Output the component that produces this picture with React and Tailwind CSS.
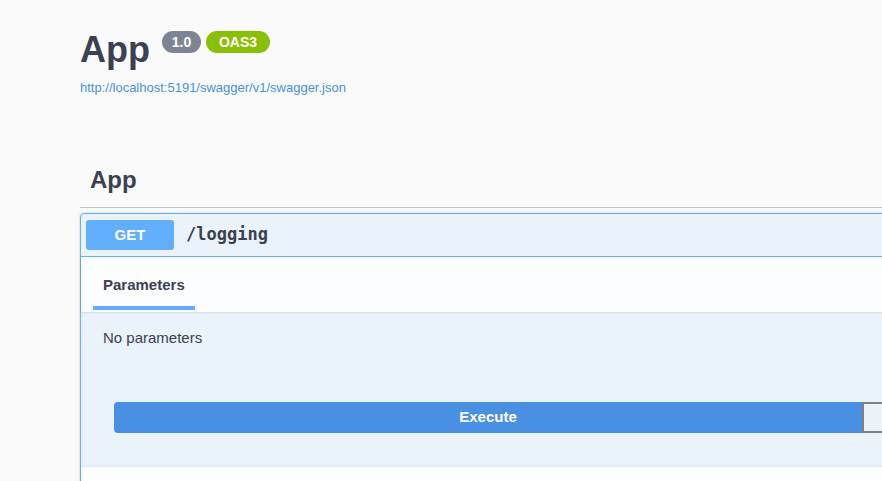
const Badge = ({ children, className }) => (
  <span className={`flex h-[22px] items-center justify-center rounded-full text-[14px] font-bold leading-none text-white ${className}`}>
    {children}
  </span>
);

const App = () => {
  return (
    <div className="h-screen w-screen overflow-hidden bg-[#fafafa] font-['Liberation_Sans',Arial,sans-serif] text-[#3b4151]">
      <div className="w-[1700px] pl-[80px]">
        {/* info header */}
        <div className="pt-[32px]">
          <div className="flex items-start">
            <h2 className="text-[36px] font-bold leading-[36px]">App</h2>
            <Badge className="ml-[12px] -mt-[1px] w-[39px] bg-[#7d8492]">1.0</Badge>
            <Badge className="ml-[5px] -mt-[1px] w-[64px] bg-[#89bf04]">OAS3</Badge>
          </div>
          <a className="mt-[12px] block text-[13px] leading-[16px] text-[#4990e2]">http://localhost:5191/swagger/v1/swagger.json</a>
        </div>

        {/* tag */}
        <div className="mt-[72px] border-b border-[#c1c3c7] pb-[15px] pl-[10px]">
          <h3 className="text-[24px] font-bold leading-[24px]">App</h3>
        </div>

        {/* operation block */}
        <div className="mt-[5px] rounded-[4px] border border-[#61affe] bg-[rgba(97,175,254,0.1)] shadow-[0_0_3px_rgba(0,0,0,0.19)]">
          <div className="flex items-center border-b border-[#61affe] px-[5px] py-[6px]">
            <span className="flex h-[30px] w-[88px] items-center justify-center rounded-[3px] bg-[#61affe] text-[15px] font-bold text-white">GET</span>
            <span className="ml-[12px] font-['DejaVu_Sans_Mono',monospace] text-[17px] font-bold">/logging</span>
          </div>

          <div className="flex h-[55px] bg-[rgba(255,255,255,0.8)] pl-[12px] pt-[18px] shadow-[0_1px_2px_rgba(0,0,0,0.1)]">
            <div className="flex w-[102px] flex-col">
              <span className="pl-[10px] text-[15px] font-bold leading-[20px]">Parameters</span>
              <span className="mt-[11px] h-[4px] bg-[#61affe]"></span>
            </div>
          </div>

          <div className="pl-[22px] pt-[16px] text-[15px] leading-[20px]">No parameters</div>

          <div className="flex pb-[34px] pl-[33px] pt-[54px]">
            <button className="h-[31px] w-[748px] shrink-0 rounded-l-[4px] bg-[#4990e2] text-[15px] font-bold text-white">Execute</button>
            {/* second half of the button group runs past the window edge */}
            <div className="h-[31px] w-[748px] shrink-0 rounded-r-[4px] border-2 border-[#808080]"></div>
          </div>

          <div className="h-[40px] bg-[rgba(255,255,255,0.8)] shadow-[0_-1px_2px_rgba(0,0,0,0.06)]"></div>
        </div>
      </div>
    </div>
  );
};

export default App;
